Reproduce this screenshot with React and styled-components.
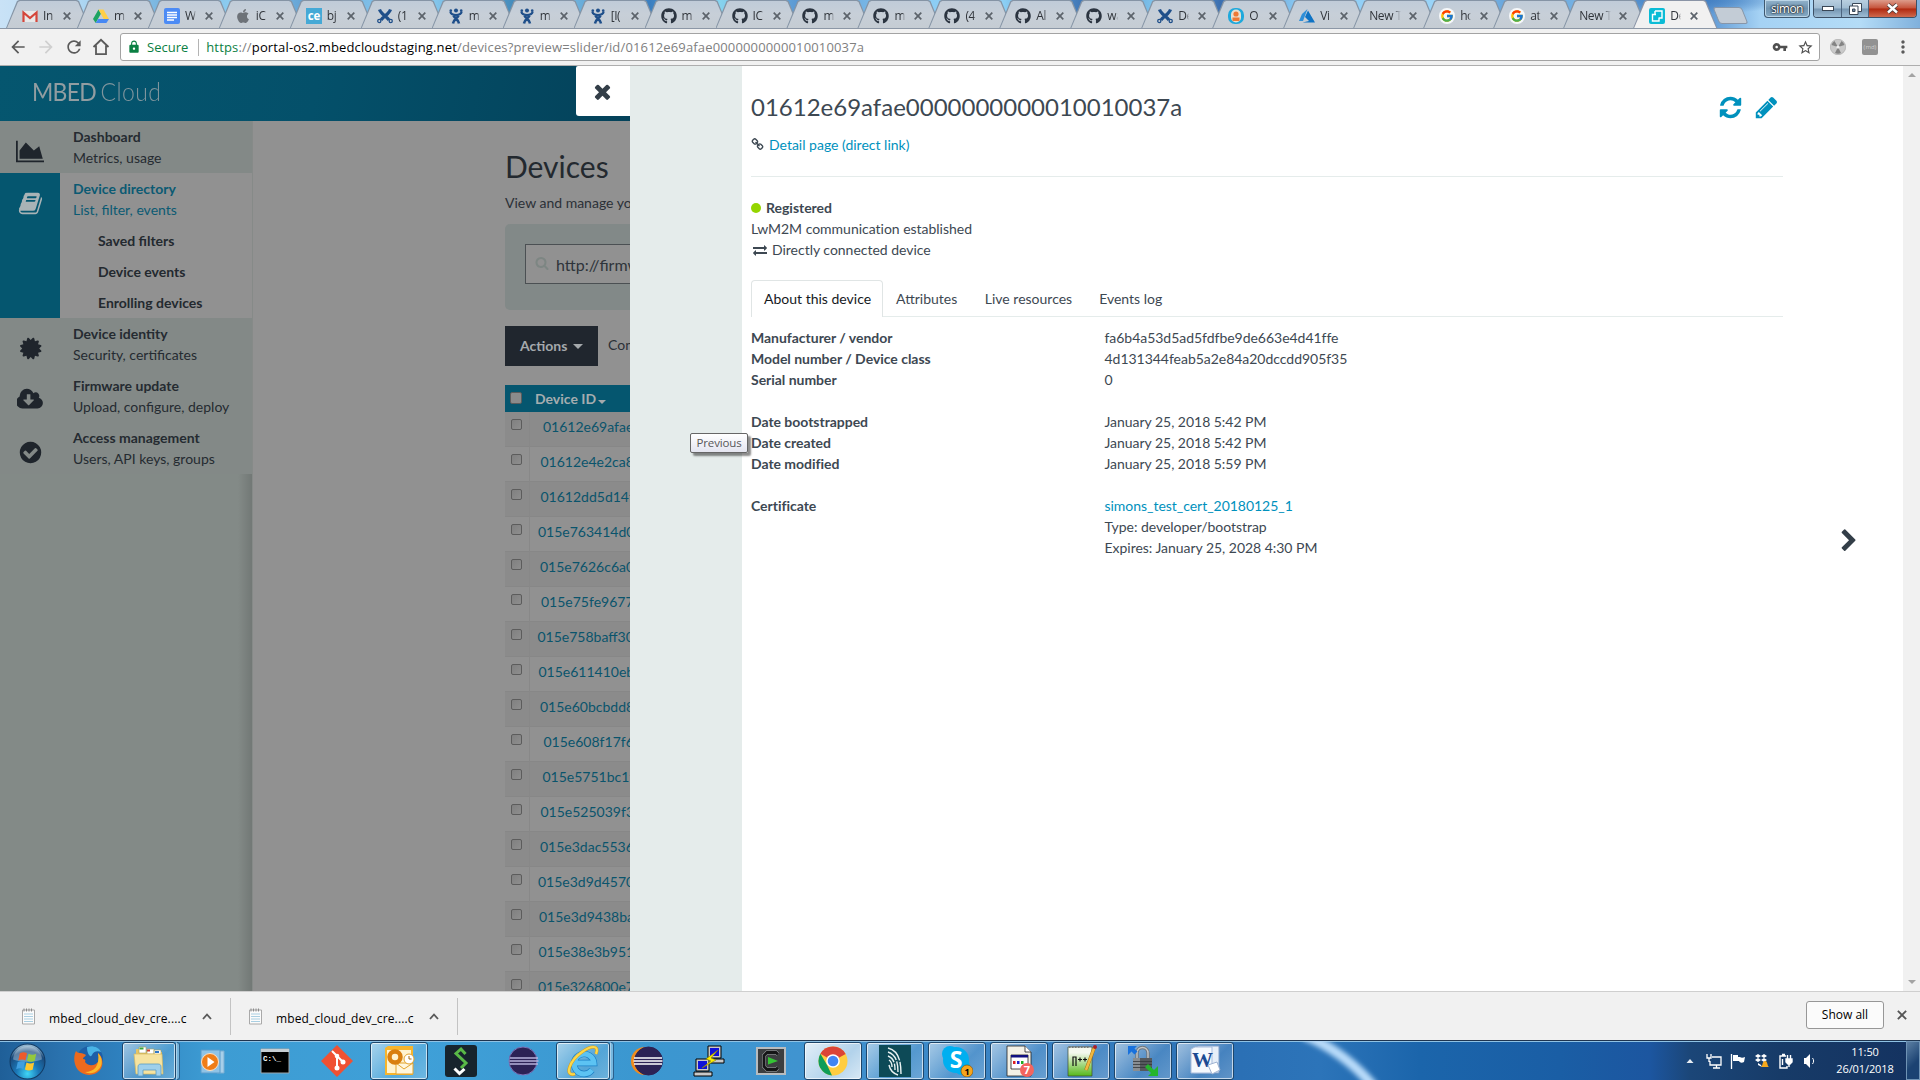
import React from "react";
import styled, { createGlobalStyle, css } from "styled-components";
import { FaGithub, FaApple } from "react-icons/fa";
import { FcGoogle } from "react-icons/fc";
import { MdVpnKey, MdStarBorder, MdLock, MdArrowBack, MdArrowForward, MdRefresh, MdMoreVert } from "react-icons/md";

const Global = createGlobalStyle`
  * { box-sizing: border-box; }
  html, body { margin: 0; padding: 0; overflow: hidden; }
  body { font-family: Lato, "Open Sans", sans-serif; font-size: 14px; line-height: 21px; color: #3d4852; }
  svg { display: block; flex: none; }
`;

const ui = css`
  font-family: "Open Sans", "Noto Sans", sans-serif;
`;

const Desktop = styled.div`
  width: 1920px;
  height: 1080px;
  display: flex;
  flex-direction: column;
  overflow: hidden;
  background: #fff;
`;

/* ---------- glyphs ---------- */
const paths = {
  refresh: "M1639 1056q0 5-1 7-64 268-268 434.5t-478 166.5q-146 0-282.5-55t-243.5-157l-129 129q-19 19-45 19t-45-19-19-45v-448q0-26 19-45t45-19h448q26 0 45 19t19 45-19 45l-137 137q71 66 161 102t187 36q134 0 250-65t186-179q11-17 53-117 8-23 30-23h192q13 0 22.5 9.5t9.5 22.5zm25-800v448q0 26-19 45t-45 19h-448q-26 0-45-19t-19-45 19-45l138-138q-148-137-349-137-134 0-250 65t-186 179q-11 17-53 117-8 23-30 23h-199q-13 0-22.5-9.5t-9.5-22.5v-7q65-268 270-434.5t480-166.5q146 0 284 55.5t245 156.5l130-129q19-19 45-19t45 19 19 45z",
  pencil: "M491 1536l91-91-235-235-91 91v107h128v128h107zm523-928q0-22-22-22-10 0-17 7l-542 542q-7 7-7 17 0 22 22 22 10 0 17-7l542-542q7-7 7-17zm-54-192l416 416-832 832h-416v-416zm683 96q0 53-37 90l-166 166-416-416 166-165q36-38 90-38 53 0 91 38l235 234q37 39 37 91z",
  times: "M1490 1322q0 40-28 68l-136 136q-28 28-68 28t-68-28l-294-294-294 294q-28 28-68 28t-68-28l-136-136q-28-28-28-68t28-68l294-294-294-294q-28-28-28-68t28-68l136-136q28-28 68-28t68 28l294 294 294-294q28-28 68-28t68 28l136 136q28 28 28 68t-28 68l-294 294 294 294q28 28 28 68z",
  chevron: "M1363 877l-742 742q-19 19-45 19t-45-19l-166-166q-19-19-19-45t19-45l531-531-531-531q-19-19-19-45t19-45l166-166q19-19 45-19t45 19l742 742q19 19 19 45t-19 45z",
  area: "M2048 1536v128h-2048v-1536h128v1408h1920zm-384-1024l256 896h-1664v-576l448-576 576 576z",
  cloud: "M1216 928q0-14-9-23t-23-9h-224v-352q0-13-9.5-22.5t-22.5-9.5h-192q-13 0-22.5 9.5t-9.5 22.5v352h-224q-13 0-22.5 9.5t-9.5 22.5q0 14 9 23l352 352q9 9 23 9t23-9l351-351q10-12 10-24zm640 224q0 159-112.5 271.5t-271.5 112.5h-1088q-185 0-316.5-131.5t-131.5-316.5q0-130 70-240t188-165q-2-30-2-43 0-212 150-362t362-150q156 0 285.5 87t188.5 231q71-62 166-62 106 0 181 75t75 181q0 76-41 138 130 31 213.5 135.5t83.5 238.5z",
  check: "M1412 734q0-28-18-46l-91-90q-19-19-45-19t-45 19l-408 407-226-226q-19-19-45-19t-45 19l-91 90q-18 18-18 46 0 27 18 45l362 362q19 19 45 19 27 0 46-19l543-543q18-18 18-45zm252 162q0 209-103 385.5t-279.5 279.5-385.5 103-385.5-103-279.5-279.5-103-385.5 103-385.5 279.5-279.5 385.5-103 385.5 103 279.5 279.5 103 385.5z",
  search: "M1216 832q0-185-131.5-316.5t-316.5-131.5-316.5 131.5-131.5 316.5 131.5 316.5 316.5 131.5 316.5-131.5 131.5-316.5zm512 832q0 52-38 90t-90 38q-54 0-90-38l-343-342q-179 124-399 124-143 0-273.5-55.5t-225-150-150-225-55.5-273.5 55.5-273.5 150-225 225-150 273.5-55.5 273.5 55.5 225 150 150 225 55.5 273.5q0 220-124 399l343 343q37 37 37 90z",
  book: "M1703 478q40 57 18 129l-275 906q-19 64-76.5 107.5t-122.5 43.5h-923q-77 0-148.5-53.5t-99.5-131.5q-24-67-2-127 0-4 3-27t4-37q1-8-3-21.5t-3-19.5q2-11 8-21t16.5-23.5 16.5-23.5q23-38 45-91.5t30-91.5q3-10 .5-30t-.5-28q3-11 17-28t17-23q21-36 42-92t25-90q1-9-2.5-32t.5-28q4-13 22-30.5t22-22.5q19-26 42.5-84.5t27.5-96.5q1-8-3-25.5t-2-26.5q2-8 9-18t18-23 17-21q8-12 16.5-30.5t15-35 16-36 19.5-32 26.5-23.5 36-11.5 47.5 5.5l-1 3q38-9 51-9h761q74 0 114 56t18 130l-274 906q-36 119-71.5 153.5t-128.5 34.5h-869q-27 0-38 15-11 16-1 43 24 70 144 70h923q29 0 56-15.5t35-41.5l300-987q7-22 5-57 38 15 59 43zm-1064 2q-4 13 2 22.5t20 9.5h608q13 0 25.5-9.5t16.5-22.5l21-64q4-13-2-22.5t-20-9.5h-608q-13 0-25.5 9.5t-16.5 22.5zm-83 256q-4 13 2 22.5t20 9.5h608q13 0 25.5-9.5t16.5-22.5l21-64q4-13-2-22.5t-20-9.5h-608q-13 0-25.5 9.5t-16.5 22.5z",
  cert: "M1376 896l138 135q30 28 20 70-12 41-52 51l-188 48 53 186q12 41-19 70-29 31-70 19l-186-53-48 188q-10 40-51 52-12 2-19 2-31 0-51-22l-135-138-135 138q-28 30-70 20-41-11-51-52l-48-188-186 53q-41 12-70-19-31-29-19-70l53-186-188-48q-40-10-52-51-10-42 20-70l138-135-138-135q-30-28-20-70 12-41 52-51l188-48-53-186q-12-41 19-70 29-31 70-19l186 53 48-188q10-41 51-51 41-12 70 19l135 139 135-139q29-30 70-19 41 10 51 51l48 188 186-53q41-12 70 19 31 29 19 70l-53 186 188 48q40 10 52 51 10 42-20 70z",
  chain: "M1520 1216q0-40-28-68l-208-208q-28-28-68-28-42 0-72 32 3 3 19 18.5t21.5 21.5 15 19 13 25.5 3.5 27.5q0 40-28 68t-68 28q-15 0-27.5-3.5t-25.5-13-19-15-21.5-21.5-18.5-19q-33 31-33 73 0 40 28 68l206 207q27 27 68 27 40 0 68-26l147-146q28-28 28-67zm-703-705q0-40-28-68l-206-207q-28-28-68-28-39 0-68 27l-147 146q-28 28-28 67 0 40 28 68l208 208q27 27 68 27 42 0 72-31-3-3-19-18.5t-21.5-21.5-15-19-13-25.5-3.5-27.5q0-40 28-68t68-28q15 0 27.5 3.5t25.5 13 19 15 21.5 21.5 18.5 19q33-31 33-73zm895 705q0 120-85 203l-147 146q-83 83-203 83-121 0-204-85l-206-207q-83-83-83-203 0-123 88-209l-88-88q-86 88-208 88-120 0-204-84l-208-208q-84-84-84-204t85-203l147-146q83-83 203-83 121 0 204 85l206 207q83 83 83 203 0 123-88 209l88 88q86-88 208-88 120 0 204 84l208 208q84 84 84 204z",
  exchange: "M1792 1184v192q0 13-9.5 22.5t-22.5 9.5h-1376v192q0 13-9.5 22.5t-22.5 9.5q-12 0-24-10l-319-320q-9-9-9-22 0-14 9-23l320-320q9-9 23-9 13 0 22.5 9.5t9.5 22.5v192h1376q13 0 22.5 9.5t9.5 22.5zm0-544q0 14-9 23l-320 320q-9 9-23 9-13 0-22.5-9.5t-9.5-22.5v-192h-1376q-13 0-22.5-9.5t-9.5-22.5v-192q0-13 9.5-22.5t22.5-9.5h1376v-192q0-14 9-23t23-9q12 0 24 10l319 319q9 9 9 23z",
};

const Glyph = ({ name, size, wide = 1792, color = "currentColor" }) => (
  <svg width={(size * wide) / 1792} height={size} viewBox={`0 0 ${wide} 1792`} fill={color}>
    <path d={paths[name]} />
  </svg>
);

/* ---------- tab strip ---------- */
const Strip = styled.div`
  ${ui}
  height: 28px;
  flex: none;
  display: flex;
  padding-left: 6px;
  background:
    radial-gradient(ellipse 110px 14px at 1690px 0, #3f7cc0 0%, transparent 100%),
    linear-gradient(90deg, #c9e2f6 0, #b5dbf5 70px, #79b6e0 160px, #8ecff2 240px, #66a5d6 300px, #8fd0f4 420px, #3f87b8 520px, #78bce2 560px, #3b7fc0 650px, #86d3ee 720px, #5a97d2 800px, #8ccdf4 920px, #8fd3f7 1000px, #4179b8 1080px, #83c9f0 1160px, #3b6fb0 1220px, #8cccf5 1300px, #9ad4f8 1440px, #5e9cd6 1520px, #7fbbe9 1600px, #4583c8 1690px, #a5d2f4 1760px, #b4dcf7 1860px, #7fb0dc 1920px);
`;

const TabEdge = styled.div`
  position: relative;
  z-index: ${(p) => (p.$active ? 2 : 0)};
  width: 84px;
  height: 28px;
  flex: none;
  margin-right: ${(p) => p.$pitch - 84}px;
  background: ${(p) => (p.$active ? "#8a94a6" : "#8594a5")};
  clip-path: polygon(0 100%, 11px 1px, 13px 0, 71px 0, 73px 1px, 84px 100%);
`;

const TabFace = styled.div`
  height: 28px;
  display: flex;
  align-items: center;
  padding: 3px 0 0 16px;
  background: ${(p) => (p.$active ? "#f1f1f1" : "linear-gradient(#bfcbd8, #c7cfd8 50%, #c5ccd3)")};
  clip-path: polygon(1px 100%, 12px 2px, 14px 1px, 70px 1px, 72px 2px, 83px 100%);
`;

const TabText = styled.span`
  flex: none;
  width: ${(p) => (p.$wide ? 32 : 11)}px;
  margin-left: ${(p) => (p.$wide ? 0 : 5)}px;
  overflow: hidden;
  white-space: nowrap;
  font-size: 12px;
  line-height: 20px;
  letter-spacing: -0.4px;
  color: #30343a;
  mask-image: linear-gradient(90deg, #000 75%, transparent);
`;

const TabClose = styled.span`
  margin-left: ${(p) => (p.$wide ? 8 : 9)}px;
`;

const Cross = ({ size = 8, color = "#5c636b", w = 1.7 }) => (
  <svg width={size} height={size} viewBox="0 0 8 8" stroke={color} strokeWidth={w}>
    <path d="M.7.7l6.6 6.6M7.3.7L.7 7.3" />
  </svg>
);

const NewTab = styled.div`
  width: 29px;
  height: 17px;
  margin: 7px 0 0 13px;
  background: #c3ccd6;
  border: 1px solid #8796a9;
  border-radius: 3px;
  transform: skewX(22deg);
`;

const WindowControls = styled.div`
  display: flex;
  margin-left: auto;
  padding-right: 3px;
  height: 19px;
`;

const UserButton = styled.div`
  width: 46px;
  height: 18px;
  margin-right: 3px;
  border: 1px solid #3f586f;
  border-top: 0;
  border-radius: 0 0 4px 4px;
  background: linear-gradient(#93b3cb, #6f93b0 50%, #86aac4);
  box-shadow: inset 0 0 0 1px #bcd6e8;
  color: #fff;
  font-size: 12px;
  line-height: 18px;
  letter-spacing: -0.5px;
  text-align: center;
  text-shadow: 0 0 2px #000, 0 0 2px #000;
`;

const CaptionGroup = styled.div`
  display: flex;
  border: 1px solid #3d5066;
  border-top: 0;
  border-radius: 0 0 4px 4px;
  overflow: hidden;
  height: 18px;
`;

const Caption = styled.div`
  width: ${(p) => p.$w}px;
  display: flex;
  align-items: center;
  justify-content: center;
  border-right: 1px solid #4d6580;
  background: ${(p) => (p.$red ? "linear-gradient(#dd9c8b, #c5523a 48%, #b0280f 52%, #cf6a4e)" : "linear-gradient(#b9cfe0, #a0bcd2 48%, #7595b1 52%, #9cbcd4)")};
  &:last-child { border-right: 0; }
`;

/* ---------- toolbar ---------- */
const Toolbar = styled.div`
  ${ui}
  height: 38px;
  flex: none;
  display: flex;
  align-items: center;
  background: #f1f1f1;
  border-top: 1px solid #8c97a6;
  border-bottom: 1px solid #aeaeae;
  color: #5a5a5a;
  padding-left: 8px;
`;

const NavIcons = styled.div`
  width: 112px;
  display: flex;
  align-items: center;
  gap: 8px;
`;

const Omnibox = styled.div`
  width: 1700px;
  height: 28px;
  display: flex;
  align-items: center;
  background: #fff;
  border: 1px solid #a3a3a3;
  border-radius: 3px;
  padding: 0 5px 0 6px;
`;

const Secure = styled.span`
  color: #0b8043;
  font-size: 13px;
  margin-left: 6px;
  padding-right: 10px;
  border-right: 1px solid #b4b4b4;
  line-height: 17px;
`;

const Url = styled.span`
  flex: 1;
  margin-left: 7px;
  font-size: 13px;
  letter-spacing: 0.15px;
  color: #808080;
  white-space: nowrap;
  i { font-style: normal; color: #0b8043; }
  b { font-weight: 400; color: #000; }
`;

const Extensions = styled.div`
  display: flex;
  align-items: center;
  margin-left: 10px;
`;

/* ---------- viewport ---------- */
const Viewport = styled.div`
  position: relative;
  height: 925px;
  flex: none;
  display: flex;
`;

const Dimmed = styled.div`
  width: 630px;
  height: 925px;
  overflow: hidden;
  background: #919191;
`;

const Brand = styled.header`
  height: 55px;
  display: flex;
  justify-content: space-between;
  background: linear-gradient(100deg, #05566f, #04506a 50%, #04425a);
`;

const Logo = styled.div`
  display: flex;
  width: 150px;
  margin: 11px 0 0 32px;
  font-size: 25.5px;
  line-height: 28px;
  color: #929da1;
  white-space: nowrap;
  font-weight: 400;
  transform: scaleX(0.9);
  transform-origin: left;
  letter-spacing: -0.8px;
  span { font-weight: 300; margin-left: 5px; color: #7f959d; letter-spacing: 0.5px; }
`;

const CloseButton = styled.div`
  width: 54px;
  height: 50px;
  background: #fff;
  border-radius: 2px 0 0 3px;
  display: flex;
  align-items: center;
  justify-content: center;
  color: #333e48;
  padding: 1px 1px 0 0;
`;

const Columns = styled.div`
  display: flex;
  height: 870px;
`;

const Sidebar = styled.nav`
  width: 253px;
  flex: none;
  background: #838a87;
  border-right: 1px solid #868a88;
`;

const NavRow = styled.div`
  display: flex;
  height: ${(p) => (p.$open ? 145 : 52)}px;
  background: ${(p) => (p.$open ? "#919191" : "#838987")};
`;

const NavIcon = styled.div`
  width: 60px;
  display: flex;
  justify-content: center;
  padding-top: ${(p) => p.$top}px;
  padding-left: ${(p) => p.$nudge || 0}px;
  background: ${(p) => (p.$open ? "#05566f" : "transparent")};
  color: ${(p) => (p.$open ? "#a9b3b6" : "#1f252c")};
`;

const NavText = styled.div`
  padding: 5px 0 0 13px;
  color: ${(p) => (p.$open ? "#0b5a73" : "#252b31")};
  white-space: nowrap;
`;

const Strong = styled.div`
  font-weight: 700;
`;

const SubLinks = styled.div`
  padding: 5px 0 0 25px;
`;

const SubLink = styled.div`
  line-height: 31px;
  font-weight: 700;
  color: #23292f;
`;

const SideShade = styled.div`
  height: 517px;
  background: linear-gradient(90deg, transparent 238px, rgba(0, 0, 0, 0.13) 252px);
`;

const Main = styled.main`
  width: 377px;
  overflow: hidden;
  padding-left: 252px;
  white-space: nowrap;
  color: #2b3037;
`;

const Title = styled.h1`
  margin: 26px 0 0;
  font-size: 30px;
  line-height: 38px;
  font-weight: 400;
  color: #23292f;
`;

const Lead = styled.div`
  margin-top: 7px;
`;

const FilterBox = styled.div`
  width: 400px;
  height: 86px;
  margin-top: 11px;
  padding: 20px;
  border-radius: 5px;
  background: #828988;
`;

const FilterInput = styled.div`
  height: 40px;
  border: 1px solid #4b5053;
  background: #919191;
  display: flex;
  align-items: center;
  padding-left: 9px;
  font-size: 16px;
  color: #2e343a;
  svg { margin-bottom: 3px; }
  span { margin: 0 0 0 7px; }
`;

const ActionsRow = styled.div`
  display: flex;
  margin-top: 16px;
  line-height: 38px;
`;

const ActionsButton = styled.div`
  flex: none;
  width: 93px;
  height: 40px;
  margin-right: 10px;
  padding: 0 0 1px 15px;
  display: flex;
  align-items: center;
  gap: 6px;
  font-weight: 700;
  color: #a5a9ac;
  background: #20262e;
`;

const Caret = styled.i`
  border: ${(p) => p.$s}px solid transparent;
  border-top-color: #a5a9ac;
  border-bottom: 0;
  margin-top: ${(p) => p.$drop}px;
`;

const HeadRow = styled.div`
  width: 400px;
  height: 27px;
  margin-top: 19px;
  display: flex;
  align-items: center;
  background: #05566f;
  color: #a5adaf;
  font-weight: 700;
  padding: 0 0 1px 5px;
`;

const HeadLabel = styled.span`
  margin: 0 2px 0 13px;
`;

const Row = styled.div`
  width: 400px;
  height: 35px;
  display: flex;
  background: ${(p) => (p.$odd ? "#8b8b8b" : "#919191")};
  border-bottom: 1px solid #878787;
  color: #0a546c;
`;

const CheckCell = styled.div`
  width: 25px;
  height: 35px;
  padding: 7px 0 0 6px;
  border-right: 1px solid #888;
`;

const Box = styled.div`
  width: ${(p) => (p.$big ? 12 : 11)}px;
  height: ${(p) => (p.$big ? 12 : 11)}px;
  border: 1px solid #5c5c5c;
  border-radius: 2px;
  background: ${(p) => (p.$big ? "#8b8b8b" : "linear-gradient(135deg, #808080, #8e8e8e)")};
`;

const IdCell = styled.div`
  padding: 4px 0 0 ${(p) => p.$x - 530}px;
`;

const Handle = styled.div`
  width: 112px;
  background: #e5eceb;
`;

const Panel = styled.section`
  width: 1161px;
  display: flex;
  background: #fff;
`;

const PanelBody = styled.div`
  width: 1041px;
  padding-left: 9px;
`;

const PanelHead = styled.div`
  display: flex;
  justify-content: space-between;
  height: 111px;
  border-bottom: 1px solid #e5eceb;
`;

const DeviceName = styled.h2`
  margin: 23px 0 0;
  font-size: 24px;
  line-height: 36px;
  font-weight: 400;
`;

const IconLine = styled.div`
  display: flex;
  align-items: center;
  height: 21px;
  gap: ${(p) => p.$gap}px;
  padding-left: ${(p) => p.$left || 0}px;
  margin-top: ${(p) => p.$top || 0}px;
`;

const Link = styled.span`
  color: #0091bd;
`;

const HeadActions = styled.div`
  display: flex;
  gap: 11px;
  padding: 29px 4px 0 0;
  color: #0091bd;
`;

const Status = styled.div`
  padding-top: 20px;
  letter-spacing: -0.02px;
`;

const Dot = styled.i`
  width: 10px;
  height: 10px;
  border-radius: 50%;
  background: #94d500;
`;

const Tabs = styled.div`
  display: flex;
  height: 37px;
  margin-top: 20px;
  border-bottom: 1px solid #e5eceb;
`;

const Tab = styled.div`
  height: 37px;
  padding: 8px ${(p) => p.$right || 13}px 0 13px;
  color: #3d4852;
  ${(p) =>
    p.$on &&
    css`
      color: #16191d;
      background: #fff;
      border: 1px solid #e0e5e5;
      border-bottom: 0;
      border-radius: 4px 4px 0 0;
      padding: 7px 11px 0 12px;
    `}
`;

const Fields = styled.dl`
  margin: 10px 0 0;
  display: grid;
  grid-template-columns: 353.5px 1fr;
`;

const Term = styled.dt`
  font-weight: 700;
  min-height: 21px;
  letter-spacing: -0.03px;
`;

const Value = styled.dd`
  margin: 0;
  min-height: 21px;
  letter-spacing: -0.03px;
`;

const NextArea = styled.div`
  width: 120px;
  display: flex;
  align-items: center;
  justify-content: center;
  padding: 25px 0 0 12px;
`;

const Scrollbar = styled.div`
  width: 17px;
  background: #f1f1f1;
  display: flex;
  flex-direction: column;
  justify-content: space-between;
  align-items: center;
  padding: 7px 0 7px;
`;

const Arrow = styled.i`
  border: 4px solid transparent;
  ${(p) => (p.$up ? "border-top: 0; border-bottom-color: #a3a3a3;" : "border-bottom: 0; border-top-color: #a3a3a3;")}
`;

const Tooltip = styled.div`
  ${ui}
  position: absolute;
  left: 690px;
  top: 367px;
  width: 58px;
  height: 20px;
  border: 1px solid #666;
  border-radius: 2px;
  background: linear-gradient(#fff, #e4e5f0);
  box-shadow: 3px 3px 2px rgba(0, 0, 0, 0.45);
  color: #575757;
  font-size: 11.5px;
  line-height: 18px;
  text-align: center;
  letter-spacing: -0.15px;
`;

/* ---------- downloads ---------- */
const Downloads = styled.div`
  ${ui}
  height: 49px;
  flex: none;
  display: flex;
  align-items: center;
  background: #f1f1f1;
  border-top: 1px solid #cfcfcf;
  font-size: 12px;
  color: #000;
`;

const Download = styled.div`
  width: ${(p) => p.$w}px;
  height: 37px;
  display: flex;
  align-items: center;
  padding-left: ${(p) => p.$pad}px;
  border-right: 1px solid #c3c3c3;
`;

const FileName = styled.span`
  width: 138px;
  margin: 4px 15px 0 13px;
  white-space: nowrap;
  letter-spacing: 0.12px;
`;

const ShowAll = styled.div`
  width: 78px;
  height: 28px;
  margin: 0 13px 2px auto;
  border: 1px solid #979797;
  border-radius: 3px;
  background: #fbfbfb;
  text-align: center;
  line-height: 26px;
  font-size: 12px;
`;

const CloseDownloads = styled.div`
  padding: 0 13px 2px 0;
`;

/* ---------- taskbar ---------- */
const Taskbar = styled.div`
  ${ui}
  height: 40px;
  flex: none;
  display: flex;
  border-top: 1px solid #1f3550;
  box-shadow: inset 0 1px 0 #8fc2e4;
  background: linear-gradient(90deg, #1f5f98 0, #2a72ae 60px, #2f83c1 130px, #3d9cd3 210px, #3fa0d8 420px, #3b97d0 640px, #4094d0 800px, #3a83c4 1000px, #2b70b5 1240px, #2c74b9 1320px, #1b65ab 1420px, #1a5ea5 1560px, #1c56a0 1650px, #1b4678 1690px, #173b68 1780px, #143260 1920px);
`;

const Slot = styled.div`
  width: ${(p) => (p.$start ? 58 : 62)}px;
  display: flex;
  padding: 1px 0 0 ${(p) => (p.$start ? 0 : 2)}px;
`;

const SlotFace = styled.div`
  width: ${(p) => (p.$start || p.$stack ? 54 : 58)}px;
  height: 38px;
  display: flex;
  align-items: center;
  justify-content: center;
  border-radius: 3px;
  ${(p) =>
    p.$on &&
    css`
      border: 1px solid #1d466b;
      box-shadow: inset 0 0 0 1px rgba(255, 255, 255, 0.65);
      background: linear-gradient(135deg, rgba(255, 255, 255, ${p.$hot ? 0.85 : 0.55}), rgba(255, 255, 255, ${p.$hot ? 0.6 : 0.12}) 60%, rgba(255, 255, 255, ${p.$hot ? 0.8 : 0.25}));
    `}
`;

const StackEdge = styled.i`
  width: 4px;
  height: 38px;
  border: 1px solid #2a5f8c;
  border-left-color: #a9d0ea;
  border-radius: 0 3px 3px 0;
  background: rgba(255, 255, 255, 0.3);
`;

const Streak = styled.div`
  flex: 1;
  height: 39px;
  overflow: hidden;
`;

const Tray = styled.div`
  display: flex;
  align-items: center;
  gap: 8px;
  color: #fff;
`;

const Clock = styled.div`
  width: 68px;
  font-size: 11px;
  line-height: 17px;
  text-align: center;
  letter-spacing: -0.1px;
  color: #fff;
  padding: 2px 0 0 0;
  margin: 0 7px 0 13px;
  white-space: nowrap;
`;

const ShowDesktop = styled.div`
  width: 14px;
  height: 39px;
  border: 1px solid #6f93b5;
  background: linear-gradient(135deg, #5c7fa3, #1b4272 60%);
`;

const Gap = styled.span`
  width: ${(p) => p.$w}px;
`;

/* ---------- favicons ---------- */
const Fav = ({ kind }) => {
  const s = { width: 16, height: 16, viewBox: "0 0 16 16" };
  switch (kind) {
    case "gmail":
      return (
        <svg {...s}>
          <rect x="1" y="3" width="14" height="11" rx="1" fill="#e8e8e8" />
          <path d="M1.500 14V4.500L8 10l6.500-5.500V14" fill="none" stroke="#d5453a" strokeWidth="2.200" />
        </svg>
      );
    case "drive":
      return (
        <svg {...s}>
          <path d="M5.500 1.500L0 11l2.700 4L8 5.500z" fill="#1da462" />
          <path d="M5.500 1.500h5L16 11h-5.300z" fill="#ffcf48" />
          <path d="M5.300 11H16l-2.600 4H2.700z" fill="#4688f4" />
        </svg>
      );
    case "doc":
      return (
        <svg {...s}>
          <rect width="16" height="16" rx="2" fill="#4c8bf5" />
          <path d="M3 4.500h10M3 7h10M3 9.500h10M3 12h7" stroke="#fff" strokeWidth="1.300" />
        </svg>
      );
    case "apple":
      return <FaApple size={16} color="#6d7278" />;
    case "ce":
      return (
        <svg {...s}>
          <rect width="16" height="16" fill="#45a9d6" />
          <text x="8" y="11.500" textAnchor="middle" fontFamily="Open Sans, sans-serif" fontWeight="700" fontSize="11.500" fill="#fff">ce</text>
        </svg>
      );
    case "conf":
      return (
        <svg {...s} fill="none" stroke="#1f4f8a">
          <path d="M2.500 1.500C4 6 9 8 12 12M13.500 1.500C12 6 7 8 4 12" strokeWidth="3.200" />
          <circle cx="2.300" cy="13" r="1.600" strokeWidth="1.300" />
          <circle cx="13.700" cy="13" r="1.600" strokeWidth="1.300" />
        </svg>
      );
    case "jira":
      return (
        <svg {...s} fill="none" stroke="#1f4f8a">
          <circle cx="8" cy="2.600" r="2" fill="#1f4f8a" stroke="none" />
          <circle cx="2.800" cy="2.600" r="1.300" fill="#1f4f8a" stroke="none" />
          <circle cx="13.200" cy="2.600" r="1.300" fill="#1f4f8a" stroke="none" />
          <path d="M2.300 3.500C3 6.800 6 7 8 7s5-.2 5.700-3.500" strokeWidth="2.200" />
          <path d="M5.500 7.500c1 2.500 5 4 5.500 8M10.500 7.500c-1 2.500-5 4-5.500 8" strokeWidth="2.600" />
        </svg>
      );
    case "git":
      return <FaGithub size={16} color="#2b3440" />;
    case "person":
      return (
        <svg {...s}>
          <rect width="16" height="16" rx="7" fill="#1fa9dc" />
          <rect x="3" y="1.500" width="10" height="13" rx="5" fill="#e9dfd0" />
          <circle cx="8" cy="6" r="2.600" fill="#ee7a36" />
          <path d="M4.500 13V9.500h7V13z" fill="#ee7a36" />
        </svg>
      );
    case "azure":
      return (
        <svg {...s}>
          <path d="M8.500 1L3 6 0 13h4z" fill="#2f8fd8" />
          <path d="M9 2.500L6 9l4 4-6.500 1.500H16z" fill="#0f73c4" />
        </svg>
      );
    case "google":
      return (
        <svg width="16" height="16" viewBox="0 0 16 16">
          <circle cx="8" cy="8" r="8" fill="#f6f8fa" />
          <FcGoogle x="1" y="1" size={14} />
        </svg>
      );
    case "mbed":
      return (
        <svg {...s}>
          <rect width="16" height="16" rx="2" fill="#0bbcd6" />
          <path d="M6 3h7v7H9.500M6 3v3.500M7 6.500H3.500v6.500h6.500V10" fill="none" stroke="#fff" strokeWidth="1.400" />
        </svg>
      );
    default:
      return null;
  }
};

const browserTabs = [
  ["gmail", "In"], ["drive", "m"], ["doc", "W"], ["apple", "iC"], ["ce", "bj"], ["conf", "(1"], ["jira", "m"], ["jira", "m"], ["jira", "[I("],
  ["git", "m"], ["git", "IC"], ["git", "m"], ["git", "m"], ["git", "(4"], ["git", "Al"], ["git", "wa"], ["conf", "De"], ["person", "O"],
  ["azure", "Vi"], [null, "New T"], ["google", "ho"], ["google", "at"], [null, "New T"], ["mbed", "De"],
];

/* ---------- taskbar icons ---------- */
const App32 = ({ kind }) => {
  const s = { width: 32, height: 32, viewBox: "0 0 32 32" };
  switch (kind) {
    case "start":
      return (
        <svg width="37" height="37" viewBox="0 0 36 36">
          <defs>
            <radialGradient id="orb" cx=".5" cy=".85" r=".8">
              <stop offset="0" stopColor="#3fd6f6" />
              <stop offset=".4" stopColor="#1b78b8" />
              <stop offset=".8" stopColor="#1a4a7c" />
              <stop offset="1" stopColor="#8fb3cc" />
            </radialGradient>
          </defs>
          <circle cx="18" cy="18" r="17" fill="url(#orb)" stroke="#123a63" />
          <path d="M4 16a14 13 0 0128 0c-8 3-20 3-28 0z" fill="#fff" opacity=".3" />
          <path d="M10.500 10c3-1.500 5-1.200 7 0l-1.500 7c-2-1.200-4.500-1.200-7 0z" fill="#ee5a2b" />
          <path d="M19 10.500c3 1.500 5 1.200 7.500 0L25 17.500c-3 1.200-5 1-7.500-.3z" fill="#94c93d" />
          <path d="M8.500 18.500c3-1.200 5-1 7 0L14 25.500c-2-1.200-4-1.200-7 0z" fill="#3f9fe0" />
          <path d="M17 19c3 1.500 5 1 7.500 0L23 26c-3 1.200-5 1-7.500-.3z" fill="#fdc82f" />
        </svg>
      );
    case "firefox":
      return (
        <svg {...s}>
          <circle cx="17" cy="14" r="13" fill="#1d5fa8" />
          <path d="M14 2c5-2 12 0 14 5-4-2-8 0-9 3s-5 0-5-8z" fill="#49b4e6" />
          <path d="M3 6c1 1 2 2 4 2 3 0 4 1 6 2-1 2-3 2-3 4 2 0 3 1 2 3 4 5 10 4 14-1 1-3 0-6-1-8 5 4 6 12 2 17-6 7-17 6-22 0C1 20 0 12 3 6z" fill="#ec6a1e" />
          <path d="M25 8c5 5 5 13 0 17-4 4-9 4-13 2 9 0 15-6 13-19z" fill="#fbb829" />
        </svg>
      );
    case "explorer":
      return (
        <svg {...s}>
          <path d="M3 4h9l2 3h15v20H3z" fill="#e5c566" />
          <path d="M6 2h7v6H6zM14 4h7v5h-7zM21 5h7v5h-7z" fill="#fff" stroke="#a8a15c" strokeWidth=".6" />
          <path d="M6.500 2.500h4v2h-4z" fill="#3aa53a" /><path d="M14 4.500h3v2h-3z" fill="#d0442e" /><path d="M22 6h4v2h-4z" fill="#3278c8" />
          <path d="M1 9h28l1 20H3z" fill="#f6e3a0" stroke="#d7b75c" strokeWidth=".7" />
          <path d="M5 31v-9c0-2 1-3 3-3h17c2 0 3 1 3 3v9h-5v-6H10v6z" fill="#9fd0ec" stroke="#5c9cc4" strokeWidth=".8" />
        </svg>
      );
    case "media":
      return (
        <svg {...s}>
          <path d="M20 6h7v22h-7z" fill="#a7cfe9" stroke="#7aaed2" /><path d="M4 5h19v23H4z" fill="#8fc3e6" stroke="#5a9ccb" />
          <circle cx="13" cy="17" r="8.500" fill="#ef7d18" stroke="#fbe1c4" />
          <path d="M10.500 12l7 5-7 5z" fill="#fff" />
        </svg>
      );
    case "cmd":
      return (
        <svg {...s}>
          <path d="M2 4h28v24H2z" fill="#000" stroke="#9aa4ab" /><path d="M2 4h28v3H2z" fill="#c6cdd2" />
          <text x="4" y="15.500" fontFamily="Liberation Mono, monospace" fontSize="7.500" fontWeight="700" fill="#fff">C:\_</text>
        </svg>
      );
    case "gitscm":
      return (
        <svg {...s}>
          <path d="M16 0l16 16-16 16L0 16z" fill="#f05133" />
          <path d="M11 6l5 5v12M16 11l5.500 5.500" fill="none" stroke="#fff" strokeWidth="2" />
          <circle cx="16" cy="11" r="2.300" fill="#fff" /><circle cx="16" cy="23" r="2.500" fill="#fff" /><circle cx="22" cy="17" r="2.500" fill="#fff" />
        </svg>
      );
    case "outlook":
      return (
        <svg {...s}>
          <path d="M2 3l3-2h25v29H2z" fill="#f7b52c" /><path d="M4 5h24v23H4z" fill="#fff3d0" />
          <path d="M13 18h17v11H13z" fill="#fff6dc" stroke="#e2a32d" /><path d="M13 18l8 6 9-6" fill="none" stroke="#e2a32d" />
          <circle cx="12" cy="12" r="5.500" fill="none" stroke="#d97f10" strokeWidth="4.500" />
          <circle cx="26" cy="14" r="5" fill="#fff" stroke="#e2a32d" /><path d="M26 11v3h2.500" stroke="#a36a10" fill="none" />
        </svg>
      );
    case "source":
      return (
        <svg {...s}>
          <rect width="32" height="32" rx="3" fill="#17242d" />
          <path d="M20.500 9l-4.500-5-5 4.500L21 18l-5 5" fill="none" stroke="#59b947" strokeWidth="3" />
          <path d="M9.500 23.500l5 5 5-4.500" fill="none" stroke="#fff" strokeWidth="3" />
        </svg>
      );
    case "eclipse":
    case "eclipse2":
      return (
        <svg {...s}>
          {kind === "eclipse2" && <circle cx="14" cy="16" r="14" fill="#f08b1d" />}
          <circle cx={kind === "eclipse2" ? 17.5 : 16} cy="16" r="14" fill="#2c2255" stroke={kind === "eclipse2" ? "#2c2255" : "#7d72b8"} />
          <path d="M3 13h28M2.500 16h29M3 19h28" stroke={kind === "eclipse2" ? "#fff" : "#b7b3dc"} strokeWidth="1.500" />
        </svg>
      );
    case "ie":
      return (
        <svg width="34" height="34" viewBox="0 0 34 34">
          <path d="M10 19h18a10 10 0 10-2 7" fill="none" stroke="#1d7fc4" strokeWidth="6.400" />
          <path d="M10 19h18a10 10 0 10-2 7" fill="none" stroke="#5cc3f3" strokeWidth="5" />
          <path d="M9 30C-2 33 3 17 16 8 24 2 34 0 30 10" fill="none" stroke="#d99a17" strokeWidth="3.200" />
          <path d="M9 30C-2 33 3 17 16 8 24 2 34 0 30 10" fill="none" stroke="#fbd84a" strokeWidth="2.200" />
        </svg>
      );
    case "putty":
      return (
        <svg {...s}>
          <g stroke="#000" fill="#c9c9c9">
            <path d="M15 1h13v12H15z" /><path d="M13 14h18v4H13z" /><path d="M3 14h13v12H3z" /><path d="M1 27h18v4H1z" />
          </g>
          <path d="M17 3h9v8h-9zM5 16h9v8H5z" fill="#1010d8" />
          <path d="M25 5L13 14l5 2-9 7 14-8-5-2z" fill="#ffee00" stroke="#8a8000" strokeWidth=".6" />
        </svg>
      );
    case "term":
      return (
        <svg {...s}>
          <path d="M2 3h28v26H2z" fill="#3c3e40" stroke="#b8bcbf" strokeWidth="2" />
          <path d="M23 9.500l-2-2h-9l-3 3v11l3 3h9l2-2" fill="none" stroke="#a4a8aa" strokeWidth="3.800" />
          <path d="M23 9.500l-2-2h-9l-3 3v11l3 3h9l2-2" fill="none" stroke="#151617" strokeWidth="2.800" />
          <path d="M13 12l10 4-10 3.500z" fill="#35c435" />
        </svg>
      );
    case "chrome":
      return (
        <svg {...s}>
          <circle cx="16" cy="16" r="14.500" fill="#ffcd40" />
          <path d="M16 16L3.400 8.800A14.500 14.500 0 0128.600 9z" fill="#db4437" /><path d="M3.400 8.800l6.800 11.500L15 30.500A14.500 14.500 0 013.400 8.800z" fill="#0f9d58" />
          <path d="M9 9h19.600H16z" fill="#db4437" />
          <circle cx="16" cy="16" r="6.800" fill="#fff" /><circle cx="16" cy="16" r="5.300" fill="#4285f4" />
        </svg>
      );
    case "finger":
      return (
        <svg {...s}>
          <rect width="32" height="32" fill="#0d4a57" />
          <g fill="none" stroke="#e9f2f2" strokeWidth="1.400">
            <path d="M9 3c8 2 13 8 13 26" strokeDasharray="18 1.500" />
            <path d="M9 7c6 2 10 7 10 20" strokeDasharray="12 1.500" />
            <path d="M9 11c5 2 7 6 7 14" strokeDasharray="9 1.500" />
            <path d="M10 15c3 2 3 4 3 7" />
            <path d="M10 20c1 5 3 8 9 10" />
          </g>
        </svg>
      );
    case "skype":
      return (
        <svg {...s}>
          <circle cx="9" cy="9" r="8" fill="#00aff0" /><circle cx="21" cy="22" r="8" fill="#00aff0" /><circle cx="15" cy="15" r="13" fill="#00aff0" />
          <text x="15" y="23" textAnchor="middle" fontFamily="Open Sans, sans-serif" fontWeight="700" fontSize="23" fill="#fff">S</text>
          <circle cx="26" cy="26" r="6" fill="#f7a51b" stroke="#7b4a00" strokeWidth=".6" />
          <text x="26" y="29.500" textAnchor="middle" fontFamily="Open Sans, sans-serif" fontWeight="700" fontSize="9" fill="#000">1</text>
        </svg>
      );
    case "page7":
      return (
        <svg {...s}>
          <path d="M4 1h18l6 6v24H4z" fill="#f3f1e6" stroke="#222" strokeWidth=".8" /><path d="M22 1v6h6" fill="#fff" stroke="#222" strokeWidth=".8" />
          <path d="M8 10h17v14H8z" fill="#fff" stroke="#000" strokeWidth=".7" /><path d="M8 10h17v2.500H8z" fill="#101080" />
          <path d="M10 16h2.500v3H10z" fill="#d22" /><path d="M14 16h2.500v3H14z" fill="#22c" /><path d="M18 16h2.500v3H18z" fill="#2a2" />
          <circle cx="24" cy="25" r="7" fill="#f4645f" />
          <text x="24" y="29" textAnchor="middle" fontFamily="Open Sans, sans-serif" fontWeight="700" fontSize="11" fill="#fff">7</text>
        </svg>
      );
    case "npp":
      return (
        <svg {...s}>
          <defs><linearGradient id="npp" x2="0" y2="1"><stop offset=".2" stopColor="#f4f8ee" /><stop offset="1" stopColor="#55b81a" /></linearGradient></defs>
          <path d="M3 2h24v29H3z" fill="url(#npp)" stroke="#3c4a30" strokeWidth=".7" />
          <path d="M4 2h21" stroke="#777" strokeWidth="2" strokeDasharray="1.500 1.500" />
          <path d="M8 21v-9h3v9M13 14.500h4M15 12.500v4M18 14.500h4M20 12.500v4" stroke="#111" strokeWidth="1.200" fill="none" />
          <path d="M29.500 2L21 25" stroke="#a06a10" strokeWidth="3.600" /><path d="M29.500 2L21 25" stroke="#f0b840" strokeWidth="2.600" /><circle cx="30" cy="2" r="2" fill="#a8202c" />
        </svg>
      );
    case "lock":
      return (
        <svg {...s}>
          <path d="M10 14V8a5.500 5.500 0 0111 0v6" fill="none" stroke="#70767b" strokeWidth="3.400" />
          <path d="M10 14V8a5.500 5.500 0 0111 0v6" fill="none" stroke="#c2c6c9" strokeWidth="1.400" />
          <path d="M6 13h19v13H6z" fill="#55595d" /><path d="M6 13h7v13H6z" fill="#888d91" />
          <path d="M6 16.500h19M6 19.500h19M6 22.500h19" stroke="#34373a" strokeWidth=".8" />
          <path d="M1 1h9L7.500 3.500l3 3-3 3-3-3L1 10z" fill="#1871dd" />
          <path d="M31 31h-10l3-3-6-6 3-3 6 6 4-4z" fill="#25b52c" />
        </svg>
      );
    case "word":
      return (
        <svg {...s}>
          <path d="M5 3l4-2h21v27H5z" fill="#e6eef8" stroke="#7f9cc6" /><path d="M2 4l4-2h17v26H2z" fill="#f4f8fd" stroke="#a7bbdb" />
          <text x="13.500" y="21.500" textAnchor="middle" fontFamily="Liberation Serif, serif" fontWeight="700" fontSize="21" fill="#1c4b93">W</text>
          <path d="M19 20l9-3 3 8-8 4z" fill="#fff" stroke="#9fb3d2" />
        </svg>
      );
    default:
      return null;
  }
};

const tasks = [
  ["firefox"], ["explorer", "stack"], ["media"], ["cmd"], ["gitscm"], ["outlook", "on"], ["source"], ["eclipse"], ["ie", "stack"],
  ["eclipse2"], ["putty"], ["term"], ["chrome", "hot"], ["finger", "on"], ["skype", "on"], ["page7", "on"], ["npp", "on"], ["lock", "on"], ["word", "on"],
];

const rows = [
  [543, "01612e69afae0"], [540.5, "01612e4e2ca80"], [540.5, "01612dd5d14f"], [538, "015e763414d0"], [540, "015e7626c6a0"], [541, "015e75fe9677"],
  [537.5, "015e758baff30"], [538.5, "015e611410eb"], [540, "015e60bcbdd8"], [543.5, "015e608f17f6"], [542.5, "015e5751bc1f"], [540.5, "015e525039f3"],
  [540, "015e3dac5536"], [538, "015e3d9d4570"], [539, "015e3d9438ba"], [538.5, "015e38e3b951"], [538, "015e326800e7"],
];

const fields = [
  ["Manufacturer / vendor", "fa6b4a53d5ad5fdfbe9de663e4d41ffe"],
  ["Model number / Device class", "4d131344feab5a2e84a20dccdd905f35"],
  ["Serial number", "0"],
  ["", ""],
  ["Date bootstrapped", "January 25, 2018 5:42 PM"],
  ["Date created", "January 25, 2018 5:42 PM"],
  ["Date modified", "January 25, 2018 5:59 PM"],
  ["", ""],
  ["Certificate", "simons_test_cert_20180125_1", true],
  ["", "Type: developer/bootstrap"],
  ["", "Expires: January 25, 2028 4:30 PM"],
];

const NotepadIcon = () => (
  <svg width="14" height="17" viewBox="0 0 14 17">
    <path d="M.5 2h12v14H.5z" fill="#fbfbfb" stroke="#a9a9a9" />
    <path d="M2 6h9M2 8.500h9M2 11h9M2 13.500h9" stroke="#a9cfe2" />
    <path d="M2 .5v3M4.500.5v3M7 .5v3M9.500.5v3" stroke="#8c8c8c" />
  </svg>
);

const UpChevron = () => (
  <svg width="10" height="7" viewBox="0 0 10 7" fill="none" stroke="#5a5a5a" strokeWidth="1.800">
    <path d="M1 6l4-4.500L9 6" />
  </svg>
);

const NavEntry = ({ icon, wide, size = 22, top = 20, nudge, title, sub, open, children }) => (
  <NavRow $open={open}>
    <NavIcon $open={open} $top={top} $nudge={nudge}>
      <Glyph name={icon} size={size} wide={wide} />
    </NavIcon>
    <NavText $open={open}>
      <Strong>{title}</Strong>
      <div>{sub}</div>
      {children}
    </NavText>
  </NavRow>
);

export default function App() {
  return (
    <Desktop>
      <Global />
      <Strip>
        {browserTabs.map(([icon, label], i) => {
          const active = i === browserTabs.length - 1;
          return (
            <TabEdge key={i} $active={active} $pitch={i < 18 ? 70.95 : 70}>
              <TabFace $active={active}>
                <Fav kind={icon} />
                <TabText $wide={!icon}>{label}</TabText>
                <TabClose $wide={!icon}>
                  <Cross />
                </TabClose>
              </TabFace>
            </TabEdge>
          );
        })}
        <NewTab />
        <WindowControls>
          <UserButton>simon</UserButton>
          <CaptionGroup>
            <Caption $w={28}>
              <svg width="12" height="6" viewBox="0 0 12 6"><rect x=".5" y=".5" width="11" height="4" fill="#fff" stroke="#3a4756" /></svg>
            </Caption>
            <Caption $w={27}>
              <svg width="13" height="12" viewBox="0 0 13 12" fill="#fff" stroke="#3a4756">
                <path d="M3.500.5h9v8h-9z" /><path d="M.5 3h8.500v8.500H.5z" /><path d="M3.500 6h2.500v2.500H3.500z" fill="#6f8ba6" />
              </svg>
            </Caption>
            <Caption $w={47} $red>
              <svg width="13" height="11" viewBox="0 0 13 11">
                <path d="M2 1.500l9 8M11 1.500l-9 8" stroke="#4a3a3a" strokeWidth="4" /><path d="M2 1.500l9 8M11 1.500l-9 8" stroke="#fff" strokeWidth="2.400" />
              </svg>
            </Caption>
          </CaptionGroup>
        </WindowControls>
      </Strip>

      <Toolbar>
        <NavIcons>
          <MdArrowBack size={20} />
          <MdArrowForward size={20} color="#cfcfcf" />
          <MdRefresh size={20} />
          <svg width="18" height="18" viewBox="0 0 18 18" fill="none" stroke="#5a5a5a" strokeWidth="1.800">
            <path d="M1.500 9L9 1.800 16.500 9M4 7.500v8.700h10V7.500" />
          </svg>
        </NavIcons>
        <Omnibox>
          <MdLock size={14} color="#0b8043" />
          <Secure>Secure</Secure>
          <Url><i>https</i>://<b>portal-os2.mbedcloudstaging.net</b>/devices?preview=slider/id/01612e69afae0000000000010010037a</Url>
          <MdVpnKey size={16} color="#505050" />
          <Gap $w={9} />
          <MdStarBorder size={17} color="#505050" />
        </Omnibox>
        <Extensions>
          <svg width="16" height="16" viewBox="0 0 16 16">
            <circle cx="8" cy="8" r="7.700" fill="#c9c9c9" stroke="#a5a5a5" strokeWidth=".6" />
            <path d="M8 8L1.500 6A7 7 0 014.500 2zM8 8l6.500-2a7 7 0 00-3-4zM8 8l-3 6a7 7 0 006 0z" fill="#838383" />
            <circle cx="8" cy="8" r="1.600" fill="#eee" />
          </svg>
          <svg width="32" height="16" viewBox="-16 0 32 16">
            <rect width="16" height="16" rx="2" fill="#929292" />
            <text x="8" y="10" textAnchor="middle" fontSize="6" fontFamily="Open Sans, sans-serif" fill="#d0d0d0">(md)</text>
          </svg>
          <Gap $w={15} />
          <MdMoreVert size={20} />
        </Extensions>
      </Toolbar>

      <Viewport>
        <Dimmed>
          <Brand>
            <Logo>MBED<span>Cloud</span></Logo>
            <CloseButton><Glyph name="times" size={23} /></CloseButton>
          </Brand>
          <Columns>
            <Sidebar>
              <NavEntry icon="area" wide={2048} size={25} top={18} title="Dashboard" sub="Metrics, usage" />
              <NavEntry icon="book" size={25} top={18} title="Device directory" sub="List, filter, events" open>
                <SubLinks>
                  <SubLink>Saved filters</SubLink>
                  <SubLink>Device events</SubLink>
                  <SubLink>Enrolling devices</SubLink>
                </SubLinks>
              </NavEntry>
              <NavEntry icon="cert" size={25} top={18} nudge={4} title="Device identity" sub="Security, certificates" />
              <NavEntry icon="cloud" wide={1920} size={25} top={17} nudge={1} title="Firmware update" sub="Upload, configure, deploy" />
              <NavEntry icon="check" size={25} top={18} title="Access management" sub="Users, API keys, groups" />
              <SideShade />
            </Sidebar>
            <Main>
              <Title>Devices</Title>
              <Lead>View and manage your devices</Lead>
              <FilterBox>
                <FilterInput>
                  <Glyph name="search" size={14} color="#7d8683" />
                  <span>http://firmware</span>
                </FilterInput>
              </FilterBox>
              <ActionsRow>
                <ActionsButton>Actions<Caret $s={5} $drop={1} /></ActionsButton>
                <span>Configure</span>
              </ActionsRow>
              <HeadRow>
                <Box $big />
                <HeadLabel>Device ID</HeadLabel>
                <Caret $s={4.5} $drop={7} />
              </HeadRow>
              {rows.map(([x, id], i) => (
                <Row key={id} $odd={i % 2 === 0}>
                  <CheckCell><Box /></CheckCell>
                  <IdCell $x={x}>{id}</IdCell>
                </Row>
              ))}
            </Main>
          </Columns>
        </Dimmed>
        <Handle />
        <Panel>
          <PanelBody>
            <PanelHead>
              <div>
                <DeviceName>01612e69afae0000000000010010037a</DeviceName>
                <IconLine $gap={5} $top={9}>
                  <Glyph name="chain" size={13} />
                  <Link>Detail page (direct link)</Link>
                </IconLine>
              </div>
              <HeadActions>
                <Glyph name="refresh" size={25} />
                <Glyph name="pencil" size={25} />
              </HeadActions>
            </PanelHead>
            <Status>
              <IconLine $gap={5}><Dot /><Strong>Registered</Strong></IconLine>
              <div>LwM2M communication established</div>
              <IconLine $gap={5} $left={2}><Glyph name="exchange" size={14} />Directly connected device</IconLine>
            </Status>
            <Tabs>
              <Tab $on>About this device</Tab>
              <Tab $right={14.5}>Attributes</Tab>
              <Tab $right={14}>Live resources</Tab>
              <Tab>Events log</Tab>
            </Tabs>
            <Fields>
              {fields.map(([k, v, link], i) => (
                <React.Fragment key={i}>
                  <Term>{k}</Term>
                  <Value>{link ? <Link>{v}</Link> : v}</Value>
                </React.Fragment>
              ))}
            </Fields>
          </PanelBody>
          <NextArea><Glyph name="chevron" size={24} color="#333e48" /></NextArea>
        </Panel>
        <Scrollbar><Arrow $up /><Arrow /></Scrollbar>
        <Tooltip>Previous</Tooltip>
      </Viewport>

      <Downloads>
        <Download $w={231} $pad={22}><NotepadIcon /><FileName>mbed_cloud_dev_cre....c</FileName><UpChevron /></Download>
        <Download $w={227} $pad={18}><NotepadIcon /><FileName>mbed_cloud_dev_cre....c</FileName><UpChevron /></Download>
        <ShowAll>Show all</ShowAll>
        <CloseDownloads><Cross size={10} color="#555" w={1.5} /></CloseDownloads>
      </Downloads>

      <Taskbar>
        <Slot $start><SlotFace $start><App32 kind="start" /></SlotFace></Slot>
        {tasks.map(([kind, state]) => (
          <Slot key={kind}>
            <SlotFace $on={!!state} $hot={state === "hot"} $stack={state === "stack"}><App32 kind={kind} /></SlotFace>
            {state === "stack" && <StackEdge />}
          </Slot>
        ))}
        <Streak>
          <svg width="200" height="39" viewBox="0 0 200 39">
            <defs><filter id="soft"><feGaussianBlur stdDeviation="2.500" /></filter></defs>
            <path d="M68-6c24 10 50 28 70 52" fill="none" stroke="#b9dcfa" strokeWidth="10" filter="url(#soft)" />
          </svg>
        </Streak>
        <Tray>
          <svg width="16" height="6" viewBox="-3.500 0 16 6"><path d="M4.500 1L8 5H1z" fill="#e8eef4" /></svg>
          <svg width="16" height="16" viewBox="0 0 16 16" fill="none" stroke="#fff" strokeWidth="1.300">
            <path d="M6 4h9v8H4V8M7 15h7M10.500 12v3M1 1v4h4V1M3 5v4" />
          </svg>
          <svg width="16" height="16" viewBox="0 0 16 16" fill="#fff">
            <path d="M1.500 1v15" stroke="#fff" strokeWidth="1.300" /><path d="M3 2h5v2h2c1 1 3 1 5 0l-1 5c-2 1-4 1-5-1H3z" />
          </svg>
          <svg width="16" height="16" viewBox="0 0 16 16" fill="#fff">
            <path d="M4 1l3 2-3 2-3-2zM10 1l3 2-3 2-3-2zM4 5l3 2-3 2-3-2zM10 5l3 2-3 2-3-2zM4 10l3 2 1 2-4-2z" />
            <path d="M7 14c2-1 1-6 4-6s2 5 4 6z" fill="#f6a81c" />
          </svg>
          <svg width="16" height="16" viewBox="0 0 16 16" fill="none" stroke="#fff" strokeWidth="1.400">
            <path d="M8 3H2v12h7v-2M4 1.500h3M4.500 6v6" /><path d="M8 6h6v3l-2 2h-2L8 9z" fill="#fff" /><path d="M9.500 2v4M12.500 2v4M11 11v3" />
          </svg>
          <svg width="16" height="16" viewBox="0 0 16 16" fill="#fff">
            <path d="M2 5h2l4-4v14l-4-4H2z" /><path d="M10.500 5c1.500 2 1.500 4 0 6" fill="none" stroke="#fff" />
          </svg>
        </Tray>
        <Clock><div>11:50</div><div>26/01/2018</div></Clock>
        <ShowDesktop />
      </Taskbar>
    </Desktop>
  );
}
